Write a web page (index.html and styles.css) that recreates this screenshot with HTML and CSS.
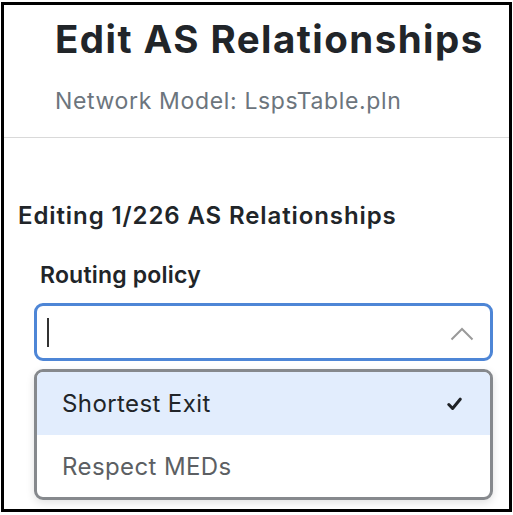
FILE: index.html
```html
<!DOCTYPE html>
<html>
<head>
<meta charset="utf-8">
<link rel="stylesheet" href="styles.css">
</head>
<body>
<div class="frame">
  <header class="header">
    <h1 class="title">Edit AS Relationships</h1>
    <p class="subtitle">Network Model: LspsTable.pln</p>
  </header>
  <main class="content">
    <h2 class="section-title">Editing 1/226 AS Relationships</h2>
    <div class="field">
      <label class="field-label">Routing policy</label>
      <div class="select">
        <span class="caret"></span>
        <svg class="chevron" width="24" height="14" viewBox="0 0 24 14"><path d="M1.5 12.5 L12 2 L22.5 12.5" fill="none" stroke="#9a9a9a" stroke-width="2"/></svg>
      </div>
      <ul class="menu">
        <li class="option selected"><span>Shortest Exit</span>
          <svg class="check" width="15" height="14" viewBox="0 0 15 14"><path d="M1.8 7.5 L5.6 11.5 L13.2 2.2" fill="none" stroke="#1f2226" stroke-width="3" stroke-linecap="round" stroke-linejoin="round"/></svg>
        </li>
        <li class="option muted"><span>Respect MEDs</span></li>
      </ul>
    </div>
  </main>
</div>
</body>
</html>
```

FILE: styles.css
```css
html, body {
  margin: 0;
  padding: 0;
  background: #fff;
}
body {
  font-family: Inter, "Noto Sans", "Liberation Sans", sans-serif;
  color: #212529;
}
.frame {
  margin: 2px 1px 3px 1px;
  border: 3px solid #000;
  height: 504px;
  overflow: hidden;
  box-sizing: content-box;
}
.header {
  padding: 10px 0 22px 51px;
  border-bottom: 1px solid #d9d9d9;
}
.title {
  margin: 0;
  font-size: 38.5px;
  line-height: 48px;
  font-weight: 700;
  letter-spacing: 1.45px;
}
.subtitle {
  margin: 24px 0 0 0;
  font-size: 23px;
  line-height: 28px;
  color: #6c757d;
  letter-spacing: 0.65px;
}
.content {
  padding: 64px 0 0 14px;
}
.section-title {
  margin: 0;
  font-size: 24px;
  line-height: 28px;
  font-weight: 600;
  letter-spacing: 0.9px;
}
.field {
  margin: 31px 16px 0 16px;
}
.field-label {
  display: block;
  padding-left: 6px;
  font-size: 23px;
  line-height: 28px;
  font-weight: 600;
  letter-spacing: 0.2px;
}
.select {
  margin-top: 14px;
  height: 52px;
  border: 3px solid #4e86d6;
  border-radius: 9px;
  display: flex;
  align-items: center;
  justify-content: space-between;
  padding: 0 16px 0 10px;
}
.caret {
  width: 2px;
  height: 29px;
  background: #333;
}
.chevron {
  margin-top: 4px;
}
.menu {
  list-style: none;
  margin: 8px 0 0 0;
  padding: 0;
  border: 3px solid #86898d;
  border-radius: 9px;
  overflow: hidden;
  box-shadow: 0 3px 8px rgba(0,0,0,0.12);
}
.option {
  height: 62px;
  display: flex;
  align-items: center;
  justify-content: space-between;
  padding: 0 28px 0 25px;
  font-size: 24px;
  letter-spacing: 0.4px;
}
.option.selected {
  background: #e2edfd;
  height: 63px;
}
.option.muted {
  color: #5c5f63;
}
```
